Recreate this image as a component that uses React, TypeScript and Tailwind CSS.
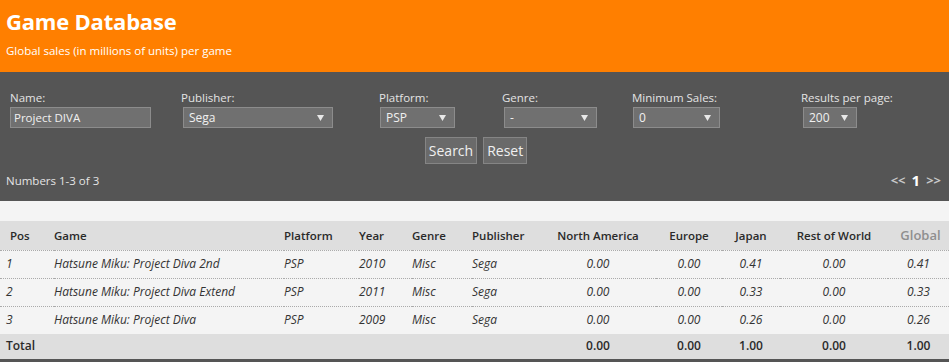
import { ReactNode } from "react";

const ROWS = [
  { pos: 1, game: "Hatsune Miku: Project Diva 2nd", year: 2010, jp: "0.41" },
  { pos: 2, game: "Hatsune Miku: Project Diva Extend", year: 2011, jp: "0.33" },
  { pos: 3, game: "Hatsune Miku: Project Diva", year: 2009, jp: "0.26" },
];

function Arrow() {
  return (
    <svg width="7" height="6" viewBox="0 0 7 6" className="shrink-0">
      <path d="M0 0h7L3.5 6z" fill="#e8e8e8" />
    </svg>
  );
}

function Select({ value, width }: { value: string; width: string }) {
  return (
    <div className={`${width} h-[21px] bg-[#707070] border border-[#8c8c8c] flex items-center justify-between pl-[5px] pr-[8px] text-[12px] text-[#f0f0f0]`}>
      <span>{value}</span>
      <Arrow />
    </div>
  );
}

function Field({ label, children, className }: { label: string; children: ReactNode; className?: string }) {
  return (
    <div className={`flex flex-col gap-[3px] ${className ?? ""}`}>
      <span className="text-[11.5px] text-[#e4e4e4] leading-[13px]">{label}</span>
      {children}
    </div>
  );
}

export default function App() {
  return (
    <div className="w-[949px] h-[362px] bg-[#f4f4f4] overflow-hidden" style={{ fontFamily: '"Open Sans", "Noto Sans", sans-serif' }}>
      {/* Header */}
      <div className="h-[72px] bg-[#ff7f00] px-[6px] pt-[7px]">
        <h1 className="text-[22px] font-bold text-white leading-[28px] tracking-[-0.2px]">Game Database</h1>
        <p className="text-[11.5px] text-white mt-[9px] leading-[14px]">Global sales (in millions of units) per game</p>
      </div>

      {/* Filter panel */}
      <div className="h-[129px] bg-[#555555] pt-[19px] px-[6px]">
        <div className="flex items-start">
          <Field label="Name:" className="pl-[4px] w-[175px]">
            <div className="w-[141px] h-[21px] bg-[#707070] border border-[#8c8c8c] flex items-center pl-[3px] text-[11.5px] text-[#f0f0f0]">
              Project DIVA
            </div>
          </Field>
          <Field label="Publisher:" className="w-[198px]">
            <div className="pl-[2px]"><Select value="Sega" width="w-[150px]" /></div>
          </Field>
          <Field label="Platform:" className="w-[123px]">
            <div className="pl-[1px]"><Select value="PSP" width="w-[75px]" /></div>
          </Field>
          <Field label="Genre:" className="w-[130px]">
            <div className="pl-[2px]"><Select value="-" width="w-[93px]" /></div>
          </Field>
          <Field label="Minimum Sales:" className="w-[169px]">
            <div className="pl-[1px]"><Select value="0" width="w-[87px]" /></div>
          </Field>
          <Field label="Results per page:">
            <div className="pl-[2px]"><Select value="200" width="w-[54px]" /></div>
          </Field>
        </div>
        <div className="flex justify-center gap-[6px] mt-[9px] pl-[3px]">
          <button className="h-[27px] px-[3px] bg-[#6a6a6a] border border-[#858585] text-[14px] text-[#f0f0f0] leading-none">Search</button>
          <button className="h-[27px] px-[3px] bg-[#6a6a6a] border border-[#858585] text-[14px] text-[#f0f0f0] leading-none">Reset</button>
        </div>
        <div className="flex justify-between items-center mt-[5px] pr-[2px]">
          <span className="text-[11.5px] text-[#e4e4e4]">Numbers 1-3 of 3</span>
          <span className="text-[13px] font-bold text-[#c8c8c8] flex items-center gap-[6px]">
            <span>&lt;&lt;</span>
            <span className="text-[15px] text-white">1</span>
            <span>&gt;&gt;</span>
          </span>
        </div>
      </div>

      {/* Results table */}
      <div className="pt-[20px]">
        <table className="w-full table-fixed border-collapse text-[12px] text-[#333]">
          <colgroup>
            <col className="w-[54px]" />
            <col className="w-[230px]" />
            <col className="w-[75px]" />
            <col className="w-[53px]" />
            <col className="w-[60px]" />
            <col className="w-[68px]" />
            <col className="w-[116px]" />
            <col className="w-[66px]" />
            <col className="w-[58px]" />
            <col className="w-[108px]" />
            <col />
          </colgroup>
          <thead>
            <tr className="bg-[#dedede] h-[29px] text-[11.5px] text-[#2a2a2a]">
              <th className="text-left font-semibold pl-[10px]">Pos</th>
              <th className="text-left font-semibold">Game</th>
              <th className="text-left font-semibold">Platform</th>
              <th className="text-left font-semibold">Year</th>
              <th className="text-left font-semibold">Genre</th>
              <th className="text-left font-semibold">Publisher</th>
              <th className="text-center font-semibold whitespace-nowrap">North America</th>
              <th className="text-center font-semibold">Europe</th>
              <th className="text-center font-semibold">Japan</th>
              <th className="text-center font-semibold whitespace-nowrap">Rest of World</th>
              <th className="text-center font-semibold pl-[4px] text-[13px] text-[#8f8f8f]">Global</th>
            </tr>
          </thead>
          <tbody className="italic">
            {ROWS.map((r) => (
              <tr key={r.pos} className="h-[28px] border-t border-dotted border-[#aaaaaa]">
                <td className="pl-[6px]">{r.pos}</td>
                <td className="whitespace-nowrap">{r.game}</td>
                <td>PSP</td>
                <td>{r.year}</td>
                <td>Misc</td>
                <td>Sega</td>
                <td className="text-center">0.00</td>
                <td className="text-center">0.00</td>
                <td className="text-center">{r.jp}</td>
                <td className="text-center">0.00</td>
                <td className="text-center">{r.jp}</td>
              </tr>
            ))}
            <tr className="h-[26px] bg-[#dedede] not-italic font-semibold text-[#2a2a2a] border-b-[3px] border-[#555]">
              <td className="pl-[6px] text-left" colSpan={6}>Total</td>
              <td className="text-center">0.00</td>
              <td className="text-center">0.00</td>
              <td className="text-center">1.00</td>
              <td className="text-center">0.00</td>
              <td className="text-center">1.00</td>
            </tr>
          </tbody>
        </table>
      </div>
    </div>
  );
}
